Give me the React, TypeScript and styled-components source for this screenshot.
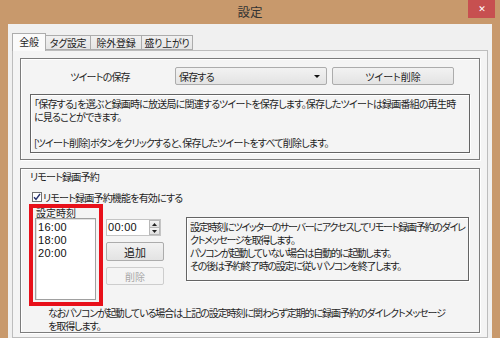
import styled, { createGlobalStyle } from "styled-components"

const GlobalStyle = createGlobalStyle`
  html, body {
    margin: 0;
    padding: 0;
  }
  body {
    width: 500px;
    height: 338px;
    overflow: hidden;
    background: #c8996c;
    font-family: "Noto Sans CJK JP", "Noto Sans", sans-serif;
    font-size: 10px;
    letter-spacing: -0.8px;
    color: #1e1e1e;
    font-feature-settings: "palt";
  }
`

const times = ["16:00", "18:00", "20:00"]
const tabs = [
  { label: "全般", width: 34 },
  { label: "タグ設定", width: 46 },
  { label: "除外登録", width: 52 },
  { label: "盛り上がり", width: 52 },
]

function App() {
  return (
    <>
      <GlobalStyle />
      <Window>
        <TitleBar>
          <span />
          <Title>設定</Title>
          <CloseButton>✕</CloseButton>
        </TitleBar>
        <Client>
          <TabStrip>
            {tabs.map((t, i) => (
              <Tab key={t.label} $active={i === 0} $width={t.width}>
                {t.label}
              </Tab>
            ))}
          </TabStrip>
          <TabPage>
            <GroupBox>
              <SaveRow>
                <RowLabel>ツイートの保存</RowLabel>
                <Dropdown>
                  保存する
                  <Arrow />
                </Dropdown>
                <Button $width={122} $height={18}>ツイート削除</Button>
              </SaveRow>
              <InfoBox $height={59}>
                「保存する」を選ぶと録画時に放送局に関連するツイートを保存します。保存したツイートは録画番組の再生時
                <br />
                に見ることができます。
                <br />
                <br />
                [ツイート削除]ボタンをクリックすると、保存したツイートをすべて削除します。
              </InfoBox>
            </GroupBox>
            <RemoteGroup>
              <GroupTitle>リモート録画予約</GroupTitle>
              <CheckRow>
                <CheckBox>
                  <svg width="8" height="8" viewBox="0 0 8 8">
                    <path d="M1 4.2 L3 6.3 L7 1" fill="none" stroke="#26326e" strokeWidth="1.4" />
                  </svg>
                </CheckBox>
                リモート録画予約機能を有効にする
              </CheckRow>
              <ScheduleRow>
                <Highlight>
                  <ListLabel>設定時刻</ListLabel>
                  <TimeList>
                    {times.map((t) => (
                      <TimeItem key={t}>{t}</TimeItem>
                    ))}
                  </TimeList>
                </Highlight>
                <Controls>
                  <Spinner>
                    <SpinText>00:00</SpinText>
                    <SpinButtons>
                      <SpinButton>
                        <svg width="5" height="3" viewBox="0 0 5 3">
                          <path d="M0 3 L2.5 0 L5 3 Z" fill="#222" />
                        </svg>
                      </SpinButton>
                      <SpinButton>
                        <svg width="5" height="3" viewBox="0 0 5 3">
                          <path d="M0 0 L2.5 3 L5 0 Z" fill="#222" />
                        </svg>
                      </SpinButton>
                    </SpinButtons>
                  </Spinner>
                  <Button $width={58} $height={19} $size={11}>追加</Button>
                  <Button $width={58} $height={18} $disabled>削除</Button>
                </Controls>
                <InfoBox $height={64} $width={283} $top={13} $left={22} $tight>
                  設定時刻にツイッターのサーバーにアクセスしてリモート録画予約のダイレ
                  <br />
                  クトメッセージを取得します。
                  <br />
                  パソコンが起動していない場合は自動的に起動します。
                  <br />
                  その後は予約終了時の設定に従いパソコンを終了します。
                </InfoBox>
              </ScheduleRow>
              <Note>
                なおパソコンが起動している場合は上記の設定時刻に関わらず定期的に録画予約のダイレクトメッセージ
                <br />
                を取得します。
              </Note>
            </RemoteGroup>
          </TabPage>
        </Client>
      </Window>
    </>
  )
}

const Window = styled.div`
  display: flex;
  flex-direction: column;
  height: 338px;
`

const TitleBar = styled.div`
  display: grid;
  grid-template-columns: 1fr auto 1fr;
  height: 24px;
  flex-shrink: 0;
`

const Title = styled.div`
  font-size: 12.5px;
  letter-spacing: 0;
  line-height: 24px;
  color: #333;
`

const CloseButton = styled.div`
  justify-self: end;
  width: 27px;
  height: 18px;
  margin-right: 5px;
  background: #c75050;
  color: #fff;
  font-family: "DejaVu Sans", sans-serif;
  font-size: 9px;
  font-weight: bold;
  display: flex;
  align-items: center;
  justify-content: center;
`

const Client = styled.div`
  flex: 1;
  margin: 0 8px;
  padding: 9px 4px 0;
  background: #f0f0f0;
  display: flex;
  flex-direction: column;
`

const TabStrip = styled.div`
  display: flex;
  align-items: flex-end;
  height: 17px;
  position: relative;
  z-index: 1;
`

const Tab = styled.div<{ $active?: boolean; $width: number }>`
  box-sizing: border-box;
  width: ${(p) => p.$width}px;
  height: ${(p) => (p.$active ? 18 : 15)}px;
  margin-bottom: ${(p) => (p.$active ? -1 : 0)}px;
  margin-left: -1px;
  &:first-child {
    margin-left: 0;
  }
  border: 1px solid #acacac;
  border-bottom: ${(p) => (p.$active ? "none" : "1px solid #acacac")};
  background: ${(p) => (p.$active ? "#fafafa" : "linear-gradient(#f0f0f0, #e5e5e5)")};
  letter-spacing: -0.3px;
  display: flex;
  align-items: center;
  justify-content: center;
  padding-bottom: ${(p) => (p.$active ? 2 : 0)}px;
  position: relative;
  z-index: ${(p) => (p.$active ? 2 : 1)};
`

const TabPage = styled.div`
  flex: 1;
  border: 1px solid #bdbdbd;
  background: #f4f4f4;
  padding: 7px 7px 0;
  display: flex;
  flex-direction: column;
  gap: 8px;
`

const GroupBox = styled.div`
  border: 1px solid #7c7c7c;
  box-shadow: inset 1px 1px 0 #fff, 1px 1px 0 #fff;
  padding: 8px 9px 6px;
  display: flex;
  flex-direction: column;
  gap: 9px;
`

const SaveRow = styled.div`
  display: flex;
  align-items: center;
  gap: 5px;
  height: 18px;
`

const RowLabel = styled.div`
  width: 140px;
  text-align: center;
`

const Dropdown = styled.div`
  box-sizing: border-box;
  width: 152px;
  height: 18px;
  border: 1px solid #acacac;
  border-radius: 2px;
  background: linear-gradient(#f2f2f2, #e3e3e3);
  padding: 0 6px 0 3px;
  display: flex;
  align-items: center;
  justify-content: space-between;
`

const Arrow = styled.span`
  width: 0;
  height: 0;
  border-left: 3px solid transparent;
  border-right: 3px solid transparent;
  border-top: 3px solid #111;
`

const Button = styled.div<{ $width: number; $height: number; $size?: number; $disabled?: boolean }>`
  box-sizing: border-box;
  width: ${(p) => p.$width}px;
  height: ${(p) => p.$height}px;
  border: 1px solid ${(p) => (p.$disabled ? "#cdcdcd" : "#acacac")};
  border-radius: 2px;
  background: ${(p) => (p.$disabled ? "#f4f4f4" : "linear-gradient(#f2f2f2, #e3e3e3)")};
  color: ${(p) => (p.$disabled ? "#a8a8a8" : "#1e1e1e")};
  font-size: ${(p) => p.$size ?? 10}px;
  letter-spacing: 0;
  display: flex;
  align-items: center;
  justify-content: center;
`

const InfoBox = styled.div<{ $height: number; $width?: number; $top?: number; $left?: number; $tight?: boolean }>`
  box-sizing: border-box;
  height: ${(p) => p.$height}px;
  width: ${(p) => (p.$width ? `${p.$width}px` : "auto")};
  margin-top: ${(p) => p.$top ?? 0}px;
  margin-left: ${(p) => p.$left ?? 0}px;
  border: 1px solid #646464;
  box-shadow: inset 1px 1px 0 #fff, 1px 1px 0 #fff;
  padding: 2px 3px;
  line-height: 13px;
  letter-spacing: ${(p) => (p.$tight ? -1.25 : -0.8)}px;
  white-space: nowrap;
  overflow: hidden;
`

const RemoteGroup = styled(GroupBox)`
  padding: 1px 9px 0;
  gap: 0;
`

const GroupTitle = styled.div`
  line-height: 13px;
`

const CheckRow = styled.div`
  display: flex;
  align-items: center;
  gap: 1px;
  height: 14px;
  margin-top: 7px;
  padding-left: 2px;
`

const CheckBox = styled.span`
  box-sizing: border-box;
  width: 10px;
  height: 10px;
  border: 1px solid #707070;
  background: #fff;
  display: flex;
  align-items: center;
  justify-content: center;
`

const ScheduleRow = styled.div`
  display: flex;
  align-items: flex-start;
`

const Highlight = styled.div`
  width: 66px;
  margin-left: -1px;
  border: 4px solid #e8101a;
  padding-bottom: 2px;
`

const ListLabel = styled.div`
  line-height: 10px;
  padding-left: 3px;
  letter-spacing: 0;
`

const TimeList = styled.div`
  box-sizing: border-box;
  width: 61px;
  height: 82px;
  margin-left: 2px;
  background: #fff;
  border: 1px solid #a0a0a0;
  box-shadow: inset 1px 1px 0 #e2e2e2;
  padding: 2px 2px 0;
`

const TimeItem = styled.div`
  font-family: "Liberation Sans", Arial, sans-serif;
  font-size: 11px;
  letter-spacing: 0.3px;
  line-height: 13px;
  color: #111;
`

const Controls = styled.div`
  display: flex;
  flex-direction: column;
  gap: 6px;
  margin: 15px 0 0 3px;
`

const Spinner = styled.div`
  box-sizing: border-box;
  width: 55px;
  height: 17px;
  border: 1px solid #c4c4c4;
  background: #fff;
  display: flex;
  justify-content: space-between;
`

const SpinText = styled.span`
  font-family: "Liberation Sans", Arial, sans-serif;
  font-size: 11px;
  letter-spacing: 0.3px;
  line-height: 15px;
  padding-left: 1px;
  color: #111;
`

const SpinButtons = styled.div`
  display: flex;
  flex-direction: column;
  width: 11px;
`

const SpinButton = styled.div`
  flex: 1;
  border: 1px solid #b8b8b8;
  margin-top: -1px;
  &:first-child {
    margin-top: 0;
  }
  background: linear-gradient(#f4f4f4, #e0e0e0);
  display: flex;
  align-items: center;
  justify-content: center;
`

const Note = styled.div`
  margin-left: 18px;
  line-height: 13px;
  letter-spacing: -1.05px;
  white-space: nowrap;
`

export default App
